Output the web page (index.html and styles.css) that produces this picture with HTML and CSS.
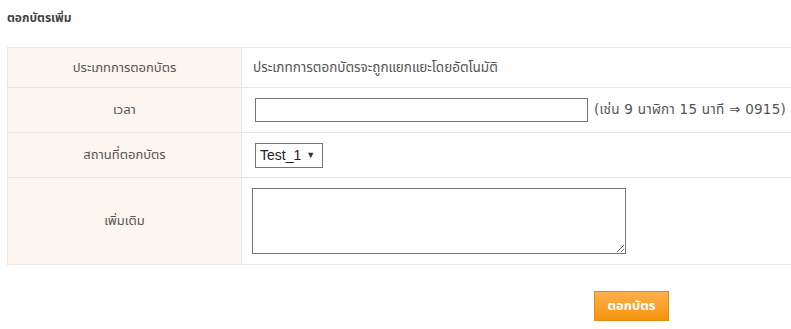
FILE: index.html
```html
<!DOCTYPE html>
<html>
<head>
<meta charset="utf-8">
<link rel="stylesheet" href="styles.css">
</head>
<body>
<div class="page">
  <h3 class="title">ตอกบัตรเพิ่ม</h3>
  <table class="form-table">
    <tr class="row-type">
      <th class="label">ประเภทการตอกบัตร</th>
      <td class="value">ประเภทการตอกบัตรจะถูกแยกแยะโดยอัตโนมัติ</td>
    </tr>
    <tr class="row-time">
      <th class="label">เวลา</th>
      <td class="value"><input type="text" class="time-input"><span class="hint">(เช่น 9 นาฬิกา 15 นาที ⇒ 0915)</span></td>
    </tr>
    <tr class="row-place">
      <th class="label">สถานที่ตอกบัตร</th>
      <td class="value"><span class="select">Test_1 <span class="arrow">▼</span></span></td>
    </tr>
    <tr class="row-note">
      <th class="label">เพิ่มเติม</th>
      <td class="value"><textarea class="note"></textarea></td>
    </tr>
  </table>
  <div class="actions">
    <button class="submit">ตอกบัตร</button>
  </div>
</div>
</body>
</html>
```
FILE: styles.css
```css
html, body {
  margin: 0;
  padding: 0;
  background: #fff;
}
body {
  font-family: "DejaVu Sans", Tahoma, "Noto Sans Thai", "Noto Sans", sans-serif;
  font-size: 13px;
  color: #555;
  overflow: hidden;
}
.page {
  padding: 0 0 0 7px;
  width: 800px;
}
.title {
  margin: 0;
  padding: 9px 0 0 0;
  height: 47px;
  box-sizing: border-box;
  font-size: 12px;
  font-weight: bold;
  color: #444;
}
.form-table {
  border-collapse: collapse;
  width: 800px;
  table-layout: fixed;
}
.form-table th, .form-table td {
  border: 1px solid #e6e6e6;
  padding: 0 11px;
  font-weight: normal;
}
.label {
  width: 234px;
  box-sizing: border-box;
  background: #fdf5ef;
  text-align: center;
  color: #555;
}
.value {
  text-align: left;
  color: #555;
  font-size: 13.5px;
}
.row-type { height: 40px; }
.row-time { height: 45px; }
.row-place { height: 45px; }
.row-note { height: 87px; }
.time-input {
  width: 333px;
  height: 24px;
  box-sizing: border-box;
  border: 1px solid #767676;
  margin: 0 6px 0 2px;
  padding: 0;
  vertical-align: middle;
}
.hint {
  vertical-align: middle;
  color: #555;
  letter-spacing: 0.25px;
}
.select {
  display: inline-flex;
  align-items: center;
  box-sizing: border-box;
  height: 25px;
  width: 68px;
  margin-left: 2px;
  border: 1px solid #767676;
  padding: 0 4px;
  color: #222;
  font-family: "Liberation Sans", Arial, sans-serif;
  font-size: 14px;
  vertical-align: middle;
}
.arrow {
  font-size: 9px;
  margin-left: 5px;
  color: #333;
}
.note {
  display: block;
  width: 374px;
  height: 66px;
  box-sizing: border-box;
  border: 1px solid #767676;
  margin: 0 0 0 -1px;
  resize: both;
}
.actions {
  display: flex;
  padding: 26px 0 0 587px;
}
.submit {
  width: 75px;
  height: 30px;
  box-sizing: border-box;
  border: 1px solid #e08c14;
  background: linear-gradient(#fcb04e, #f7940a);
  color: #fff;
  font-family: Tahoma, "Noto Sans Thai", "Noto Sans", sans-serif;
  font-size: 13px;
  font-weight: bold;
  padding: 0;
}
```
